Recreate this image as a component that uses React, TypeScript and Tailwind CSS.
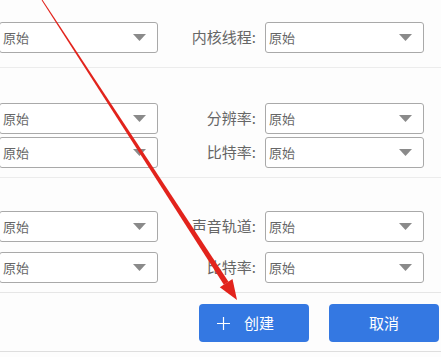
import React from 'react';

const font = { fontFamily: '"Microsoft YaHei", "Noto Sans CJK SC", "Noto Sans", sans-serif' };

function Select() {
  return (
    <div className="flex h-[31px] w-[159px] items-center justify-between rounded-[3px] border border-[#a9a9a9] bg-white pl-[3px] pr-[11px]">
      <span className="text-[13px] text-[#666]">原始</span>
      <svg width="13" height="7" viewBox="0 0 13 7">
        <path d="M0 0 H13 L6.5 7 Z" fill="#8a8a8a" />
      </svg>
    </div>
  );
}

function Row({ label }: { label: string }) {
  return (
    <div className="flex items-center">
      <div className="-ml-px">
        <Select />
      </div>
      <div className="w-[107px] pr-[9px] text-right text-[15px] text-[#666]">{label}</div>
      <Select />
    </div>
  );
}

export default function App() {
  return (
    <div className="relative h-[357px] w-[441px] overflow-hidden bg-[#fdfdfd]" style={font}>
      {/* section 1 */}
      <div className="pt-[22px] pb-[14px]">
        <Row label="内核线程:" />
      </div>
      <div className="h-px bg-[#ececec]" />

      {/* section 2 */}
      <div className="flex flex-col gap-[3px] pt-[35px] pb-[9px]">
        <Row label="分辨率:" />
        <Row label="比特率:" />
      </div>
      <div className="h-px bg-[#ececec]" />

      {/* section 3 */}
      <div className="flex flex-col gap-[10px] pt-[33px] pb-[9px]">
        <Row label="声音轨道:" />
        <Row label="比特率:" />
      </div>
      <div className="h-px bg-[#e6e6e6]" />

      {/* actions */}
      <div className="flex justify-end gap-[20px] pt-[11px] pb-[9px] pr-[2px]">
        <button className="flex h-[38px] w-[110px] items-center rounded-[4px] bg-[#3478e2] pl-[18px] text-[15px] text-white">
          <svg className="mr-[14px]" width="13" height="13" viewBox="0 0 13 13">
            <path d="M6.5 0 V13 M0 6.5 H13" stroke="#fff" strokeWidth="1.2" />
          </svg>
          创建
        </button>
        <button className="flex h-[38px] w-[110px] items-center justify-center rounded-[4px] bg-[#3478e2] text-[15px] text-white">
          取消
        </button>
      </div>
      <div className="h-px bg-[#dedede]" />

      {/* annotation arrow */}
      <svg className="pointer-events-none absolute left-0 top-0" width="441" height="357" viewBox="0 0 441 357">
        <polygon points="42.4,-0.3 41.6,0.3 223.9,284.7 228.5,281.7" fill="#e2231c" />
        <polygon points="237,300 232.5,279 219.8,287.3" fill="#e2231c" />
      </svg>
    </div>
  );
}
